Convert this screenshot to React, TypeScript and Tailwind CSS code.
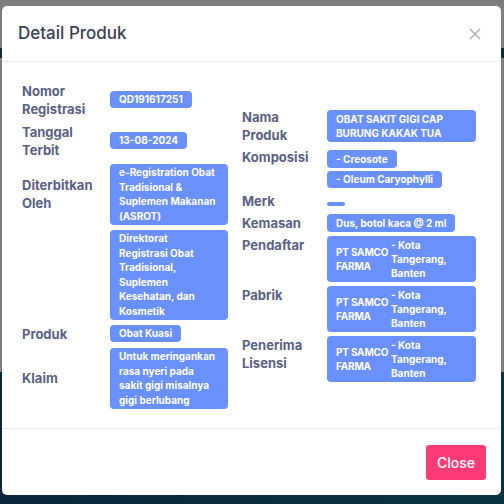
import React from 'react'

const font = { fontFamily: 'Inter, "Open Sans", sans-serif' }

function Badge({ children, className = '' }: { children?: React.ReactNode; className?: string }) {
  return (
    <span
      className={
        'block rounded-[4px] bg-[#6a90fc] px-[9px] py-[1.5px] text-[10px] font-bold leading-[14.5px] text-white ' +
        className
      }
    >
      {children}
    </span>
  )
}

function Company() {
  return (
    <span className="flex w-[149px] items-center rounded-[4px] bg-[#6a90fc] px-[9px] py-[2px] text-[10px] font-bold leading-[14px] text-white">
      <span className="w-[55px] shrink-0 whitespace-nowrap tracking-[-0.2px]">
        PT SAMCO
        <br />
        FARMA
      </span>
      <span className="whitespace-nowrap">
        - Kota
        <br />
        Tangerang,
        <br />
        Banten
      </span>
    </span>
  )
}

const labelCls = 'text-[13px] font-bold leading-[18px] text-[#5b6185]'

function LeftRow({ label, children }: { label?: React.ReactNode; children: React.ReactNode }) {
  return (
    <div className="flex items-center">
      <div className={'w-[88px] shrink-0 ' + labelCls}>{label}</div>
      <div className="flex w-[118px] flex-col items-start">{children}</div>
    </div>
  )
}

function RightRow({
  label,
  children,
  top = false,
}: {
  label: React.ReactNode
  children: React.ReactNode
  top?: boolean
}) {
  return (
    <div className={'flex ' + (top ? 'items-start' : 'items-center')}>
      <div className={'w-[85px] shrink-0 ' + labelCls}>{label}</div>
      <div className="flex w-[149px] flex-col items-start">{children}</div>
    </div>
  )
}

export default function App() {
  return (
    <div className="relative h-[504px] w-[504px] overflow-hidden" style={font}>
      {/* page behind the overlay */}
      <div className="flex h-full flex-col">
        <div className="h-[48px] bg-[#7e7e7e]" />
        <div className="h-[10px] bg-[#0d2a38]" />
        <div className="h-[314px] bg-[#7e7e7e]" />
        <div className="flex-1 bg-gradient-to-r from-[#0b2638] to-[#0a3540]" />
      </div>

      {/* modal */}
      <div className="absolute left-[2px] top-[6px] flex h-[489px] w-[499px] flex-col rounded-[5px] bg-white">
        <div className="flex h-[56px] items-center justify-between border-b border-[#eeeeee] pl-[16px] pr-[20px]">
          <h2 className="text-[17px] font-medium text-[#3e3e52]">Detail Produk</h2>
          <svg width="12" height="12" viewBox="0 0 12 12" className="text-[#a9a9b4]">
            <path d="M1 1 L11 11 M11 1 L1 11" stroke="currentColor" strokeWidth="1.4" />
          </svg>
        </div>

        <div className="flex flex-1 items-center gap-[14px] pl-[20px]">
          <div className="flex w-[206px] flex-col gap-[5px]">
            <LeftRow
              label={
                <>
                  Nomor
                  <br />
                  Registrasi
                </>
              }
            >
              <Badge>QD191617251</Badge>
            </LeftRow>
            <LeftRow
              label={
                <>
                  Tanggal
                  <br />
                  Terbit
                </>
              }
            >
              <Badge>13-08-2024</Badge>
            </LeftRow>
            <LeftRow
              label={
                <>
                  Diterbitkan
                  <br />
                  Oleh
                </>
              }
            >
              <Badge className="w-full">
                e-Registration Obat
                <br />
                Tradisional &amp;
                <br />
                Suplemen Makanan
                <br />
                (ASROT)
              </Badge>
            </LeftRow>
            <LeftRow>
              <Badge className="w-full">
                Direktorat
                <br />
                Registrasi Obat
                <br />
                Tradisional,
                <br />
                Suplemen
                <br />
                Kesehatan, dan
                <br />
                Kosmetik
              </Badge>
            </LeftRow>
            <LeftRow label="Produk">
              <Badge>Obat Kuasi</Badge>
            </LeftRow>
            <LeftRow label="Klaim">
              <Badge className="w-full">
                Untuk meringankan
                <br />
                rasa nyeri pada
                <br />
                sakit gigi misalnya
                <br />
                gigi berlubang
              </Badge>
            </LeftRow>
          </div>

          <div className="flex w-[234px] flex-col gap-[4px]">
            <RightRow
              label={
                <>
                  Nama
                  <br />
                  Produk
                </>
              }
            >
              <Badge className="w-full">
                OBAT SAKIT GIGI CAP
                <br />
                BURUNG KAKAK TUA
              </Badge>
            </RightRow>
            <RightRow label="Komposisi" top>
              <div className="flex flex-col items-start gap-[3px] pt-[2px]">
                <Badge>- Creosote</Badge>
                <Badge>- Oleum Caryophylli</Badge>
              </div>
            </RightRow>
            <RightRow label="Merk">
              <div className="flex pt-[5px]">
                <span className="h-[4px] w-[18px] rounded-[3px] bg-[#6a90fc]" />
              </div>
            </RightRow>
            <RightRow label="Kemasan">
              <Badge>Dus, botol kaca @ 2 ml</Badge>
            </RightRow>
            <RightRow label="Pendaftar" top>
              <Company />
            </RightRow>
            <RightRow label="Pabrik" top>
              <Company />
            </RightRow>
            <RightRow
              top
              label={
                <>
                  Penerima
                  <br />
                  Lisensi
                </>
              }
            >
              <Company />
            </RightRow>
          </div>
        </div>

        <div className="flex h-[67px] items-center justify-end border-t border-[#eeeeee] pr-[15px]">
          <button className="h-[35px] w-[60px] rounded-[3px] bg-[#ff3b77] text-[14px] font-medium text-white">
            Close
          </button>
        </div>
      </div>
    </div>
  )
}
